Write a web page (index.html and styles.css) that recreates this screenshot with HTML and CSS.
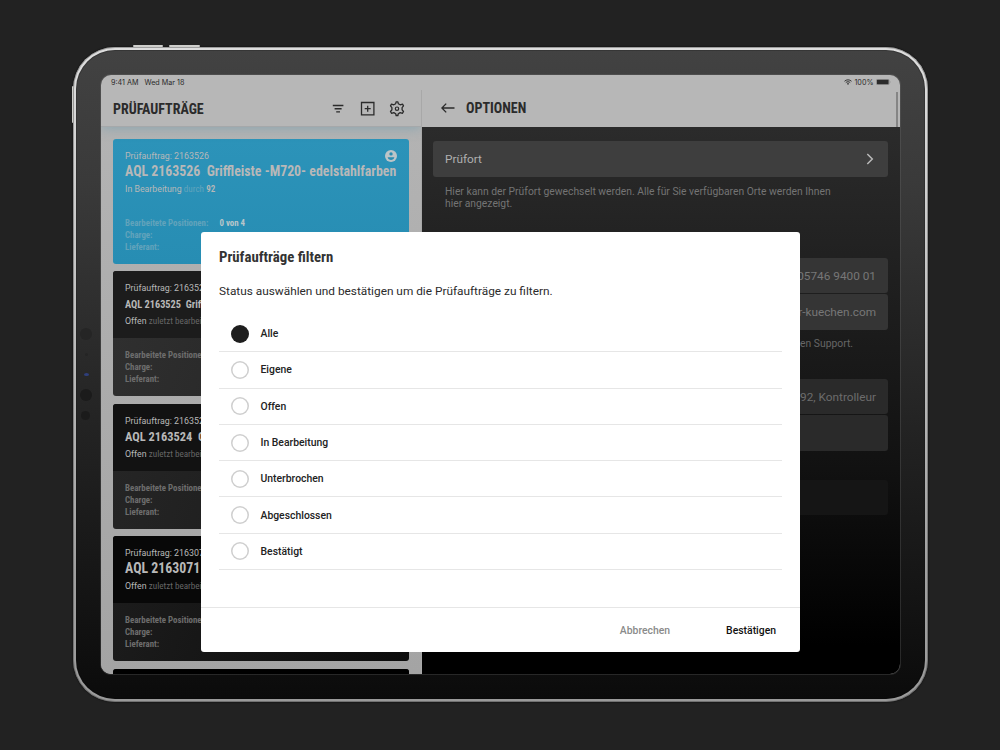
FILE: index.html
```html
<!DOCTYPE html>
<html lang="de">
<head>
    <meta charset="utf-8">
    <title>Prüfaufträge</title>
    <link rel="stylesheet" href="styles.css">
</head>
<body>
    <div class="tablet">
        <i class="key key-up"></i>
        <i class="key key-down"></i>
        <i class="key key-side"></i>
        <i class="sensor sensor-1"></i>
        <i class="sensor sensor-2"></i>
        <i class="sensor sensor-3"></i>
        <i class="sensor sensor-4"></i>
        <i class="sensor sensor-5"></i>

        <div class="screen">
            <div class="statusbar">
                <span>9:41 AM</span>
                <span class="date">Wed Mar 18</span>
                <span class="system">
                    <svg width="8" height="6" viewBox="0 0 16 12"><path d="M1 4.5C5 .7 11 .7 15 4.5M3.6 7.2c2.5-2.3 6.3-2.3 8.8 0" fill="none" stroke="#333" stroke-width="2"/><path d="M5.6 9.2c1.4-1.2 3.4-1.2 4.8 0L8 11.8z" fill="#333"/></svg>
                    <span>100%</span>
                    <svg width="15" height="6" viewBox="0 0 15 6"><rect x=".3" y=".3" width="12.9" height="5.4" rx="1.2" fill="none" stroke="#777" stroke-width=".5"/><rect x=".9" y=".8" width="11.7" height="4.4" rx=".6" fill="#2b2b2b"/><path d="M14 2v2q.8-1 0-2" fill="#777"/></svg>
                </span>
            </div>

            <div class="panes">
                <div class="orders">
                    <div class="header">
                        <h1>PRÜFAUFTRÄGE</h1>
                        <div class="tools">
                            <svg width="16" height="16" viewBox="0 0 16 16"><path d="M2.8 4.5h10.6M4.6 7.7h7M6.2 10.9h3.8" stroke="#2b2b2b" stroke-width="1.4"/></svg>
                            <svg width="16" height="16" viewBox="0 0 16 16"><path d="M1.5 1.5h12.4v12.4H1.5zM7.7 4.7v6M4.7 7.7h6" fill="none" stroke="#2b2b2b" stroke-width="1.3"/></svg>
                            <svg width="16" height="16" viewBox="0 0 16 16"><path d="M6.7 2.7L7.1.9h1.8l.4 1.8 1.9 1.1 2.3-.7 1 1.8-1.4 1.7v2.2l1.4 1.7-1 1.8-2.3-.7-1.9 1.1-.4 1.8H7.1l-.4-1.8-1.9-1.1-2.3.7-1-1.8 1.4-1.7V6.600l-1.400-1.700 1-1.800 2.300.7z" fill="none" stroke="#2b2b2b" stroke-width="1.3" stroke-linejoin="round"/><circle cx="8" cy="7.700" r="1.700" fill="none" stroke="#2b2b2b" stroke-width="1.2"/></svg>
                        </div>
                    </div>
                    <div class="list">
                        <div class="card active">
                            <div class="card-top">
                                <div class="number">Prüfauftrag: 2163526</div>
                                <div class="name">AQL 2163526&nbsp; Griffleiste -M720- edelstahlfarben</div>
                                <div class="state">In Bearbeitung <em>durch</em> <b>92</b></div>
                                <svg class="user" width="12" height="12" viewBox="0 0 12 12"><circle cx="6" cy="6" r="6" fill="#bcc5c8"/><circle cx="6" cy="3.9" r="1.7" fill="#2b8db1"/><path d="M2.6 7.2h6.8C9 9 7.6 9.9 6 9.9S3 9 2.6 7.2" fill="#2b8db1"/></svg>
                            </div>
                            <div class="card-meta">
                                <div>Bearbeitete Positionen: <span>0 von 4</span></div>
                                <div>Charge:</div>
                                <div>Lieferant:</div>
                            </div>
                        </div>
                        <div class="card">
                            <div class="card-top">
                                <div class="number">Prüfauftrag: 2163525</div>
                                <div class="name small">AQL 2163525&nbsp; Griffleiste -M720-</div>
                                <div class="state">Offen <em>zuletzt bearbeitet</em></div>
                            </div>
                            <div class="card-meta">
                                <div>Bearbeitete Positionen:</div>
                                <div>Charge:</div>
                                <div>Lieferant:</div>
                            </div>
                        </div>
                        <div class="card">
                            <div class="card-top">
                                <div class="number">Prüfauftrag: 2163524</div>
                                <div class="name medium">AQL 2163524&nbsp; Griffleiste</div>
                                <div class="state">Offen <em>zuletzt bearbeitet</em></div>
                            </div>
                            <div class="card-meta">
                                <div>Bearbeitete Positionen:</div>
                                <div>Charge:</div>
                                <div>Lieferant:</div>
                            </div>
                        </div>
                        <div class="card">
                            <div class="card-top">
                                <div class="number">Prüfauftrag: 2163071</div>
                                <div class="name">AQL 2163071</div>
                                <div class="state">Offen <em>zuletzt bearbeitet</em></div>
                            </div>
                            <div class="card-meta">
                                <div>Bearbeitete Positionen:</div>
                                <div>Charge:</div>
                                <div>Lieferant:</div>
                            </div>
                        </div>
                        <div class="card">
                            <div class="card-top"></div>
                        </div>
                    </div>
                </div>

                <div class="options">
                    <div class="header">
                        <svg width="14" height="12" viewBox="0 0 14 12"><path d="M13.5 6H1M5.2 1.6L.9 6l4.3 4.4" fill="none" stroke="#2b2b2b" stroke-width="1.3"/></svg>
                        <h1>OPTIONEN</h1>
                    </div>
                    <div class="settings">
                        <div class="field link">
                            <span>Prüfort</span>
                            <svg width="8" height="12" viewBox="0 0 8 12"><path d="M1.3 1l5 5-5 5" fill="none" stroke="#b8b8b8" stroke-width="1.5"/></svg>
                        </div>
                        <p class="hint">Hier kann der Prüfort gewechselt werden. Alle für Sie verfügbaren Orte werden Ihnen hier angezeigt.</p>
                        <div class="field group-start">05746 9400 01</div>
                        <div class="field">info@haecker-kuechen.com</div>
                        <p class="hint right">Kontaktieren Sie den Support.</p>
                        <div class="field user-start">92, Kontrolleur</div>
                        <div class="field"></div>
                        <div class="field faded"></div>
                    </div>
                </div>
            </div>
        </div>
    </div>

    <div class="dialog">
        <div class="dialog-body">
            <h2>Prüfaufträge filtern</h2>
            <p>Status auswählen und bestätigen um die Prüfaufträge zu filtern.</p>
            <ul>
                <li><i class="radio checked"></i>Alle</li>
                <li><i class="radio"></i>Eigene</li>
                <li><i class="radio"></i>Offen</li>
                <li><i class="radio"></i>In Bearbeitung</li>
                <li><i class="radio"></i>Unterbrochen</li>
                <li><i class="radio"></i>Abgeschlossen</li>
                <li><i class="radio"></i>Bestätigt</li>
            </ul>
        </div>
        <div class="dialog-footer">
            <button class="cancel">Abbrechen</button>
            <button>Bestätigen</button>
        </div>
    </div>
</body>
</html>
```
FILE: styles.css
```css
* { box-sizing: border-box; }
body {
    margin: 0;
    width: 1000px;
    height: 750px;
    overflow: hidden;
    background: #222;
    font-family: Roboto, sans-serif;
    color: #2b2b2b;
}
h1, h2, p, ul { margin: 0; padding: 0; }
h1, h2, .name, .state em, .card-meta {
    font-family: "Roboto Condensed", Roboto, sans-serif;
    font-stretch: 75%;
}

/* tablet */
.tablet {
    position: relative;
    width: 855px;
    height: 655px;
    margin: 47px 0 0 73px;
    padding: 25px;
    border: 3px solid transparent;
    border-radius: 42px;
    background:
        linear-gradient(#424242, #3a3a3a 20%, #222 60%, #0b0b0b) padding-box,
        linear-gradient(#dedede, #c8c8c8 30%, #a0a0a0 80%, #9a9a9a) border-box;
    box-shadow: 0 0 1px 1px #1a1a1a, inset 0 0 0 1px rgba(10,10,10,0.2);
}
/* dark outer edge of the metal frame */
.tablet::after {
    content: "";
    position: absolute;
    inset: -3px;
    border: 1px solid rgba(40,40,40,0.35);
    border-radius: 42px;
}
.key {
    position: absolute;
    background: #cfcfcc;
    border-radius: 1px;
}
.key-up { left: 57px; top: -5px; width: 30px; height: 2px; }
.key-down { left: 93px; top: -5px; width: 31px; height: 2px; }
.key-side { left: -4px; top: 36px; width: 2px; height: 37px; }
.sensor {
    position: absolute;
    border-radius: 50%;
    background: #252525;
}
.sensor-1 { left: 4px; top: 278px; width: 12px; height: 12px; }
.sensor-2 { left: 9px; top: 303px; width: 3px; height: 3px; }
.sensor-3 { left: 8px; top: 323px; width: 5px; height: 3px; background: #2f3f7c; }
.sensor-4 { left: 4px; top: 339px; width: 12px; height: 12px; background: #1b1b1b; }
.sensor-5 { left: 5px; top: 361px; width: 9px; height: 9px; background: #1b1b1b; }

.screen {
    width: 799px;
    height: 599px;
    overflow: hidden;
    border-radius: 10px;
    background: #b7b7b7;
    box-shadow: 0 0 0 1px rgba(120,120,120,0.25);
}
.statusbar {
    display: flex;
    align-items: center;
    height: 15px;
    padding: 0 9px 1px 10px;
    font-family: Inter, sans-serif;
    font-size: 7.2px;
}
.date { margin-left: 6px; }
.system {
    display: flex;
    align-items: center;
    gap: 2.5px;
    margin-left: auto;
}
.panes { display: flex; height: 584px; }
.orders {
    width: 320px;
    background: linear-gradient(#b4b4b4, #a4a4a4);
}
.options {
    flex: 1;
    border-left: 1px solid #a8a8a8;
    background: linear-gradient(#2e2e2e, #222 26%, #111 65%, #000 95%);
}
.header {
    display: flex;
    align-items: center;
    height: 37px;
    padding: 0 16px 0 12px;
    background: #b7b7b7;
}
.orders .header {
    padding-top: 1px;
    border-bottom: 1px solid #a5a8aa;
    box-shadow: 0 1px 12px rgba(120,160,175,0.7);
    clip-path: inset(0 0 -20px 0);
}
.options .header { position: relative; padding-left: 19px; padding-bottom: 1px; gap: 11px; }
.options .header::after {
    content: "";
    position: absolute;
    right: 2px;
    top: 2px;
    width: 2px;
    height: 35px;
    background: #858585;
}
h1 { font-size: 14px; font-weight: 700; line-height: 18px; }
.tools { display: flex; gap: 13.5px; margin-left: auto; }

/* order cards */
.list {
    display: flex;
    flex-direction: column;
    gap: 7.5px;
    padding: 11.6px 12px 0;
}
.card {
    height: 125px;
    flex-shrink: 0;
    overflow: hidden;
    border-radius: 3px;
    color: #b8b8b8;
    background: linear-gradient(110deg, #303030, #222);
}
.card-top {
    position: relative;
    height: 67px;
    padding: 11px 12px 0;
    background: #1c1c1c;
    white-space: nowrap;
}
.card:nth-child(3) .card-top { background: #121212; }
.card:nth-child(3) { background: linear-gradient(110deg, #262626, #181818); }
.card:nth-child(4) .card-top { background: #080808; }
.card:nth-child(4) { background: linear-gradient(110deg, #1d1d1d, #0c0c0c); }
.card:nth-child(5) .card-top { background: #000; }
.card.active { background: linear-gradient(#2c93b9, #278db3); }
.card.active .card-top { background: none; }
.number { font-size: 8.85px; line-height: 12px; }
.name { height: 18px; font-size: 13.85px; font-weight: 700; line-height: 19px; }
.name.small { font-size: 10.3px; line-height: 21px; }
.name.medium { font-size: 12.4px; }
.state { padding-top: 3px; font-size: 8.8px; line-height: 12px; }
.state em { font-size: 9.1px; font-style: normal; color: #666; }
.state b { font-family: "Roboto Condensed", Roboto, sans-serif; font-stretch: 75%; font-size: 9px; font-weight: 600; }
.active .state em { color: #63a4bd; }
.user { position: absolute; right: 12px; top: 11px; }
.card-meta {
    padding: 11px 12px 0;
    font-size: 8.85px;
    font-weight: 700;
    line-height: 12px;
    color: #6d6d6d;
}
.active .card-meta { color: #62a3bb; }
.card-meta span { margin-left: 9px; color: #b9c6ca; }

/* settings */
.settings { padding: 14px 12px 0 11px; }
.field {
    display: flex;
    align-items: center;
    justify-content: flex-end;
    height: 35.5px;
    margin-bottom: 0.8px;
    padding: 0 12px;
    border-radius: 3px;
    background: #353535;
    color: #777;
    font-size: 11.8px;
}
.field.link {
    justify-content: space-between;
    height: 36px;
    padding-right: 14px;
    background: #3e3e3e;
    color: #b0b0b0;
}
.hint {
    width: 420px;
    padding: 8px 12px 0;
    font-size: 10.33px;
    line-height: 12px;
    color: #747474;
}
.hint.right { width: auto; padding-right: 35px; text-align: right; color: #666; }
.group-start { margin-top: 48px; }
.user-start { margin-top: 28.5px; }
.user-start, .user-start + .field { background: #2a2a2a; color: #6c6c6c; }
.field.faded { margin-top: 29px; background: #151515; }

/* filter dialog */
.dialog {
    position: absolute;
    left: 201px;
    top: 232px;
    width: 599px;
    height: 420px;
    border-radius: 3px;
    background: #fff;
}
.dialog-body { height: 375px; padding: 15px 18px 0; }
h2 { font-size: 14.8px; font-weight: 700; line-height: 20px; color: #333; }
.dialog p { margin: 14px 0 15px; font-size: 11.83px; line-height: 20px; }
ul { list-style: none; }
li {
    display: flex;
    align-items: center;
    height: 36.3px;
    padding-left: 12px;
    border-bottom: 1px solid #e6e6e6;
    font-size: 10.4px;
    font-weight: 500;
    color: #222;
}
.radio {
    width: 18px;
    height: 18px;
    margin-right: 11.5px;
    border-radius: 50%;
    box-shadow: inset 0 0 0 1.5px #cfcfcf;
}
.radio.checked { background: #1e1e1e; box-shadow: none; }
.dialog-footer {
    display: flex;
    justify-content: flex-end;
    gap: 56px;
    height: 45px;
    padding-right: 24px;
    border-top: 1px solid #e6e6e6;
}
button {
    padding: 0;
    border: 0;
    background: none;
    font: 500 10.4px Roboto, sans-serif;
    color: #111;
}
.cancel { color: #8a8a8a; }
```
